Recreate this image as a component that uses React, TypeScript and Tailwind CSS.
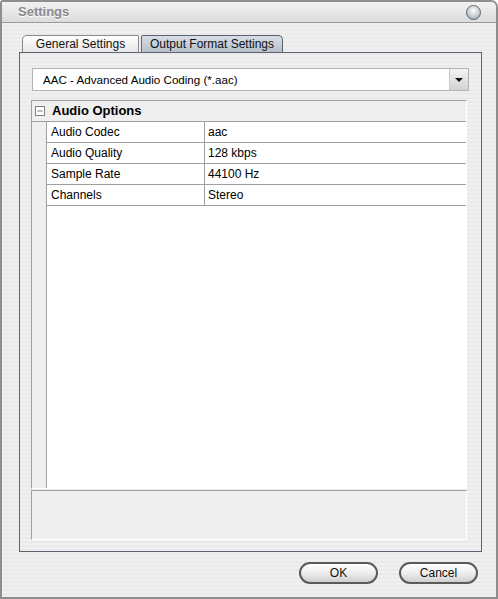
import { Minus } from 'lucide-react';

const rows = [
  { label: 'Audio Codec', value: 'aac' },
  { label: 'Audio Quality', value: '128 kbps' },
  { label: 'Sample Rate', value: '44100 Hz' },
  { label: 'Channels', value: 'Stereo' },
];

export default function App() {
  return (
    <div
      className="w-[498px] h-[599px] flex flex-col border-2 border-[#8e8e8e] rounded-tr-[7px] rounded-tl-[3px] overflow-hidden text-[12px] text-black"
      style={{ fontFamily: '"Liberation Sans", Arial, sans-serif' }}
    >
      {/* Title bar */}
      <div className="h-[21px] shrink-0 flex items-center justify-between pl-[16px] pr-[15px] bg-gradient-to-b from-[#f2f2f2] to-[#dcdcdc] border-b border-[#9a9a9a]">
        <span className="text-[13px] font-bold text-[#8a8a8a] [text-shadow:0_1px_0_#ffffff]">Settings</span>
        <div className="w-[15px] h-[15px] rounded-full border border-[#5e6670] bg-[radial-gradient(circle_at_50%_35%,#ffffff_0%,#c7ccd2_55%,#8d959e_100%)]" />
      </div>

      {/* Body */}
      <div className="flex-1 flex flex-col pl-[17px] pr-[15px] pt-[12px] bg-[repeating-linear-gradient(180deg,#f0f0f0_0px,#f0f0f0_2px,#eaeaea_2px,#eaeaea_4px)]">
        {/* Tabs */}
        <div className="flex items-end h-[17px] pl-[3px] gap-[2px]">
          <div className="h-[17px] w-[117px] flex items-center justify-center border border-b-0 border-[#8a8a8a] rounded-tl-[5px] rounded-tr-[2px] bg-gradient-to-b from-[#ffffff] to-[#e6e6e6] text-[#111]">
            General Settings
          </div>
          <div className="h-[17px] w-[142px] flex items-center justify-center border border-b-0 border-[#5c6471] rounded-tl-[2px] rounded-tr-[5px] bg-gradient-to-b from-[#d8dee6] to-[#b7c0cc] text-[#111]">
            Output Format Settings
          </div>
        </div>

        {/* Tab panel */}
        <div className="w-[463px] h-[500px] border border-[#5c6471] flex flex-col pl-[11px] pr-[13px] pt-[15px]">
          {/* Combo */}
          <div className="h-[23px] w-[437px] ml-[1px] flex bg-white border border-[#b2b2b2]">
            <div className="flex-1 flex items-center pl-[10px] text-[11.6px]">AAC - Advanced Audio Coding (*.aac)</div>
            <div className="w-[19px] flex items-center justify-center border-l border-[#c8c8c8] bg-gradient-to-b from-[#f4f4f4] to-[#d2d2d2]">
              <div className="w-0 h-0 border-l-[4px] border-r-[4px] border-t-[4px] border-l-transparent border-r-transparent border-t-[#111]" />
            </div>
          </div>

          {/* Property grid */}
          <div className="mt-[9px] w-[436px] h-[389px] flex flex-col border-t border-l border-[#a0a0a0] border-r border-b border-r-white border-b-white">
            <div className="h-[21px] flex bg-[#efefef] border-b border-[#a0a0a0]">
              <div className="w-[15px] flex items-center justify-center">
                <div className="w-[10px] h-[10px] border border-[#808080] bg-white flex items-center justify-center">
                  <Minus size={8} strokeWidth={2} className="text-[#333]" />
                </div>
              </div>
              <div className="flex-1 flex items-center pl-[5px] font-bold text-[13px]">Audio Options</div>
            </div>
            <div className="flex-1 flex">
              <div className="w-[15px] bg-[#efefef] border-r border-[#a0a0a0]" />
              <div className="flex-1 bg-white flex flex-col">
                {rows.map((r) => (
                  <div key={r.label} className="h-[21px] flex border-b border-[#a0a0a0]">
                    <div className="w-[158px] flex items-center pl-[4px] border-r border-[#a0a0a0]">{r.label}</div>
                    <div className="flex-1 flex items-center pl-[3px]">{r.value}</div>
                  </div>
                ))}
              </div>
            </div>
          </div>

          {/* Description area */}
          <div className="mt-[1px] w-[436px] h-[50px] bg-[#efefef] border-t border-l border-[#a0a0a0] border-r border-b border-r-white border-b-white" />
        </div>

        {/* Buttons */}
        <div className="flex justify-end gap-[21px] pt-[10px] pr-[3px]">
          {['OK', 'Cancel'].map((b) => (
            <div
              key={b}
              className="w-[79px] h-[22px] rounded-full border-2 border-[#5a5a5a] bg-gradient-to-b from-[#ffffff] via-[#eeeeee] to-[#cfcfcf] flex items-center justify-center text-[#111] shadow-[inset_0_1px_0_#ffffff]"
            >
              {b}
            </div>
          ))}
        </div>
      </div>
    </div>
  );
}
